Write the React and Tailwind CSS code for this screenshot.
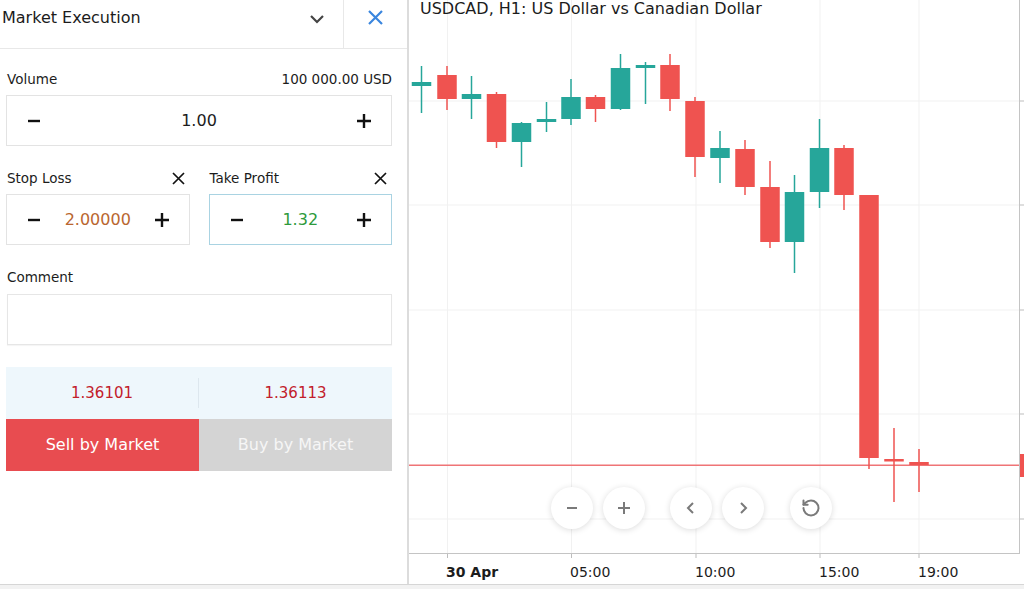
import { RotateCcw } from 'lucide-react'

const font = { fontFamily: '"DejaVu Sans", Verdana, sans-serif' }

const GREEN = '#26a69a'
const RED = '#ef5350'

// [centerX, bodyTop, bodyBottom, wickTop, wickBottom, color]
const candles = [
  [421.5, 82, 86, 66, 113, 'g'],
  [447, 75, 99, 66, 110, 'r'],
  [471.5, 94, 99, 76, 119, 'g'],
  [496.5, 94, 142, 92, 148, 'r'],
  [521.5, 123, 142, 122, 167, 'g'],
  [546.5, 119, 122, 102, 132, 'g'],
  [571, 97, 119, 79, 125, 'g'],
  [595.5, 97, 109, 95, 122, 'r'],
  [620.5, 68, 109, 54, 110, 'g'],
  [645.5, 65, 68, 62, 104, 'g'],
  [670, 65, 99, 54, 111, 'r'],
  [695, 101, 157, 97, 177, 'r'],
  [720, 148, 158, 131, 183, 'g'],
  [745, 149, 187, 140, 195, 'r'],
  [770, 187, 242, 161, 248, 'r'],
  [794.5, 192, 242, 175, 273, 'g'],
  [819.5, 148, 192, 119, 208, 'g'],
  [844, 148, 195, 145, 210, 'r'],
  [869, 195, 458, 195, 469, 'r'],
  [894, 459, 461, 428, 502, 'r'],
  [919, 462, 465, 449, 492, 'r'],
]

const gridY = [101, 205, 310, 414, 519]
const gridX = [447.5, 571.5, 696, 820, 919]
const timeLabels = [
  { x: 446, t: '30 Apr', bold: true },
  { x: 570, t: '05:00' },
  { x: 695, t: '10:00' },
  { x: 819, t: '15:00' },
  { x: 918, t: '19:00' },
]

function Minus() {
  return (
    <svg width="14" height="14" viewBox="0 0 14 14">
      <path d="M1 7h12" stroke="#111" strokeWidth="2.4" />
    </svg>
  )
}

function Plus() {
  return (
    <svg width="16" height="16" viewBox="0 0 16 16">
      <path d="M1 8h14M8 1v14" stroke="#111" strokeWidth="2.4" />
    </svg>
  )
}

function SmallX() {
  return (
    <svg width="13" height="13" viewBox="0 0 13 13">
      <path d="M1 1l11 11M12 1L1 12" stroke="#111" strokeWidth="1.7" />
    </svg>
  )
}

function Stepper({ value, color, border = 'border-[#e3e3e3]' }) {
  return (
    <div className={`h-[51px] flex items-center border ${border}`}>
      <div className="w-[54px] flex items-center justify-center"><Minus /></div>
      <div className="flex-1 text-center text-[16px]" style={{ color }}>{value}</div>
      <div className="w-[54px] flex items-center justify-center"><Plus /></div>
    </div>
  )
}

function ChartButton({ children }) {
  return (
    <div className="w-[42px] h-[42px] rounded-full bg-white shadow-[0_1px_6px_rgba(0,0,0,0.14)] flex items-center justify-center text-[#7a7a7a]">
      {children}
    </div>
  )
}

export default function App() {
  return (
    <div className="w-[1024px] h-[589px] bg-[#f2f2f2] overflow-hidden" style={font}>
      <div className="h-[585px] flex bg-white border-b border-[#d6d6d6]">
        {/* Order panel */}
        <div className="w-[409px] shrink-0 border-r-2 border-[#dcdcdc] flex flex-col text-[#1c1c1c]">
          <div className="h-[49px] flex items-stretch border-b border-[#e8e8e8]">
            <div className="flex-1 flex items-center pl-[2px] pb-[13px] text-[16px]">Market Execution</div>
            <div className="w-[52px] flex items-center justify-center pb-[10px]">
              <svg width="16" height="10" viewBox="0 0 16 10">
                <path d="M2 2l6 6 6-6" fill="none" stroke="#444" strokeWidth="2.2" />
              </svg>
            </div>
            <div className="w-px bg-[#e8e8e8]" />
            <div className="w-[63px] flex items-center justify-center pb-[14px]">
              <svg width="17" height="17" viewBox="0 0 17 17">
                <path d="M2 2l13 13M15 2L2 15" stroke="#3a86de" strokeWidth="2.2" />
              </svg>
            </div>
          </div>

          <div className="pl-[6px] pr-[15px] flex flex-col">
            <div className="mt-[22px] h-4 flex items-center justify-between text-[13.5px]">
              <span className="pl-px">Volume</span>
              <span>100 000.00 USD</span>
            </div>
            <div className="mt-[8px]">
              <Stepper value="1.00" color="#1c1c1c" />
            </div>

            <div className="mt-[24px] grid grid-cols-2 gap-[19px]">
              <div>
                <div className="h-4 flex items-center justify-between text-[13.5px]">
                  <span className="pl-px">Stop Loss</span>
                  <span className="mr-[5px]"><SmallX /></span>
                </div>
                <div className="mt-[8px]">
                  <Stepper value="2.00000" color="#b9662f" />
                </div>
              </div>
              <div>
                <div className="h-4 flex items-center justify-between text-[13.5px]">
                  <span className="pl-px">Take Profit</span>
                  <span className="mr-[5px]"><SmallX /></span>
                </div>
                <div className="mt-[8px]">
                  <Stepper value="1.32" color="#2e9a3c" border="border-[#a9d3e2]" />
                </div>
              </div>
            </div>

            <div className="mt-[24px] h-4 flex items-center text-[13.5px] pl-px">Comment</div>
            <div className="mt-[9px] ml-px h-[51px] border border-[#e6e6e6] shadow-[0_1px_1px_rgba(0,0,0,0.04)]" />

            <div className="mt-[22px] h-[52px] grid grid-cols-2 bg-[#eef7fc] items-center text-[15px] text-[#c2202b]">
              <div className="text-center border-r border-[#dde7ee] h-[30px] flex items-center justify-center">1.36101</div>
              <div className="text-center">1.36113</div>
            </div>
            <div className="h-[52px] grid grid-cols-2 text-[16px]">
              <div className="bg-[#e84c50] text-white flex items-center justify-center">Sell by Market</div>
              <div className="bg-[#d4d4d4] text-[#f6f6f6] flex items-center justify-center">Buy by Market</div>
            </div>
          </div>
        </div>

        {/* Chart */}
        <div className="relative flex-1">
          <svg width="615" height="585" viewBox="409 0 615 585" className="block">
            {gridY.map((y) => (
              <line key={'h' + y} x1="409" x2="1019" y1={y} y2={y} stroke="#f1f1f1" />
            ))}
            {gridX.map((x) => (
              <line key={'v' + x} x1={x} x2={x} y1="0" y2="553" stroke="#f1f1f1" />
            ))}
            {gridY.map((y) => (
              <line key={'t' + y} x1="1019" x2="1024" y1={y} y2={y} stroke="#bdbdbd" />
            ))}
            {gridX.map((x) => (
              <line key={'bt' + x} x1={x} x2={x} y1="553" y2="558" stroke="#bdbdbd" />
            ))}

            <rect x="409" y="464.5" width="615" height="1.5" fill="#ef7476" />

            {candles.map(([x, bt, bb, wt, wb, c], i) => {
              const col = c === 'g' ? GREEN : RED
              return (
                <g key={i}>
                  <line x1={x} x2={x} y1={wt} y2={wb} stroke={col} strokeWidth="1.5" />
                  <rect x={x - 9.75} y={bt} width="19.5" height={Math.max(bb - bt, 2.5)} fill={col} />
                </g>
              )
            })}

            <line x1="409" x2="1019.5" y1="553.5" y2="553.5" stroke="#c4c4c4" />
            <line x1="1019.5" x2="1019.5" y1="0" y2="554" stroke="#c4c4c4" />
            <rect x="1020" y="454" width="4" height="23" fill={RED} />

            {timeLabels.map((l) => (
              <text
                key={l.t}
                x={l.x}
                y="577"
                fontSize="14"
                fontWeight={l.bold ? 700 : 400}
                fill="#1c1c1c"
                fontFamily='"DejaVu Sans", Verdana, sans-serif'
              >
                {l.t}
              </text>
            ))}
          </svg>

          <div className="absolute left-[11px] top-[-3px] text-[16px] text-[#1c1c1c] whitespace-nowrap">
            USDCAD, H1: US Dollar vs Canadian Dollar
          </div>

          <div className="absolute left-[142px] top-[487px] flex items-center">
            <div className="flex gap-[10px]">
              <ChartButton>
                <svg width="14" height="14" viewBox="0 0 14 14"><path d="M2 7h10" stroke="currentColor" strokeWidth="2" /></svg>
              </ChartButton>
              <ChartButton>
                <svg width="16" height="16" viewBox="0 0 16 16"><path d="M2 8h12M8 2v12" stroke="currentColor" strokeWidth="2" /></svg>
              </ChartButton>
            </div>
            <div className="flex gap-[10px] ml-[25px]">
              <ChartButton>
                <svg width="12" height="14" viewBox="0 0 12 14"><path d="M8 2L3 7l5 5" fill="none" stroke="currentColor" strokeWidth="2" /></svg>
              </ChartButton>
              <ChartButton>
                <svg width="12" height="14" viewBox="0 0 12 14"><path d="M4 2l5 5-5 5" fill="none" stroke="currentColor" strokeWidth="2" /></svg>
              </ChartButton>
            </div>
            <div className="ml-[26px]">
              <ChartButton>
                <RotateCcw size={20} strokeWidth={2.4} />
              </ChartButton>
            </div>
          </div>
        </div>
      </div>
    </div>
  )
}
